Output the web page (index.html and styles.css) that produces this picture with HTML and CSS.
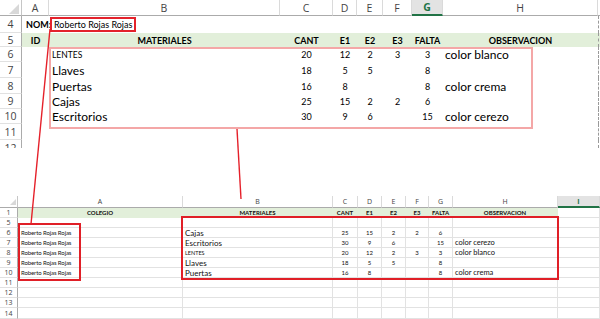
FILE: index.html
```html
<!DOCTYPE html>
<html lang="es">
<head>
<meta charset="utf-8">
<title>Hoja de materiales</title>
<link rel="stylesheet" href="styles.css">
</head>
<body>
<div class="page">
  <div class="sheet top">
    <div class="corner"><span class="tri"></span></div>
    <div class="ch">A</div><div class="ch">B</div><div class="ch">C</div><div class="ch">D</div><div class="ch">E</div><div class="ch">F</div><div class="ch sel">G</div><div class="ch">H</div><div class="ch last"></div>

    <div class="rh">4</div><div class="c b">NOM:</div><div class="c"><span class="namebox">Roberto Rojas Rojas</span></div><div class="c"></div><div class="c"></div><div class="c"></div><div class="c"></div><div class="c"></div><div class="c"></div><div class="c edge"></div>

    <div class="rh">5</div><div class="c g b n">ID</div><div class="c g b n">MATERIALES</div><div class="c g b n">CANT</div><div class="c g b n">E1</div><div class="c g b n">E2</div><div class="c g b n">E3</div><div class="c g b n">FALTA</div><div class="c g b n">OBSERVACION</div><div class="c g edge"></div>

    <div class="rh">6</div><div class="c"></div><div class="c txt sm">LENTES</div><div class="c n num">20</div><div class="c n num">12</div><div class="c n num">2</div><div class="c n num">3</div><div class="c n num">3</div><div class="c obs">color blanco</div><div class="c edge"></div>

    <div class="rh">7</div><div class="c"></div><div class="c txt">Llaves</div><div class="c n num">18</div><div class="c n num">5</div><div class="c n num">5</div><div class="c n num"></div><div class="c n num">8</div><div class="c obs"></div><div class="c edge"></div>

    <div class="rh">8</div><div class="c"></div><div class="c txt">Puertas</div><div class="c n num">16</div><div class="c n num">8</div><div class="c n num"></div><div class="c n num"></div><div class="c n num">8</div><div class="c obs">color crema</div><div class="c edge"></div>

    <div class="rh">9</div><div class="c"></div><div class="c txt">Cajas</div><div class="c n num">25</div><div class="c n num">15</div><div class="c n num">2</div><div class="c n num">2</div><div class="c n num">6</div><div class="c obs"></div><div class="c edge"></div>

    <div class="rh">10</div><div class="c"></div><div class="c txt">Escritorios</div><div class="c n num">30</div><div class="c n num">9</div><div class="c n num">6</div><div class="c n num"></div><div class="c n num">15</div><div class="c obs">color cerezo</div><div class="c edge"></div>

    <div class="rh">11</div><div class="c"></div><div class="c"></div><div class="c"></div><div class="c"></div><div class="c"></div><div class="c"></div><div class="c"></div><div class="c"></div><div class="c edge"></div>

    <div class="rh cut"><span class="cutlabel">12</span></div><div class="c"></div><div class="c"></div><div class="c"></div><div class="c"></div><div class="c"></div><div class="c"></div><div class="c"></div><div class="c"></div><div class="c edge"></div>
  </div>

  <div class="sheet low">
    <div class="corner"><span class="tri"></span></div>
    <div class="ch">A</div><div class="ch">B</div><div class="ch">C</div><div class="ch">D</div><div class="ch">E</div><div class="ch">F</div><div class="ch">G</div><div class="ch">H</div><div class="ch sel">I</div>

    <div class="rh">1</div><div class="c g b n">COLEGIO</div><div class="c g b n">MATERIALES</div><div class="c g b n">CANT</div><div class="c g b n">E1</div><div class="c g b n">E2</div><div class="c g b n">E3</div><div class="c g b n">FALTA</div><div class="c g b n">OBSERVACION</div><div class="c"></div>

    <div class="rh">5</div><div class="c"></div><div class="c"></div><div class="c"></div><div class="c"></div><div class="c"></div><div class="c"></div><div class="c"></div><div class="c"></div><div class="c"></div>

    <div class="rh">6</div><div class="c who">Roberto Rojas Rojas</div><div class="c txt">Cajas</div><div class="c n num">25</div><div class="c n num">15</div><div class="c n num">2</div><div class="c n num">2</div><div class="c n num">6</div><div class="c obs"></div><div class="c"></div>

    <div class="rh">7</div><div class="c who">Roberto Rojas Rojas</div><div class="c txt">Escritorios</div><div class="c n num">30</div><div class="c n num">9</div><div class="c n num">6</div><div class="c n num"></div><div class="c n num">15</div><div class="c obs">color cerezo</div><div class="c"></div>

    <div class="rh">8</div><div class="c who">Roberto Rojas Rojas</div><div class="c txt sm">LENTES</div><div class="c n num">20</div><div class="c n num">12</div><div class="c n num">2</div><div class="c n num">3</div><div class="c n num">3</div><div class="c obs">color blanco</div><div class="c"></div>

    <div class="rh">9</div><div class="c who">Roberto Rojas Rojas</div><div class="c txt">Llaves</div><div class="c n num">18</div><div class="c n num">5</div><div class="c n num">5</div><div class="c n num"></div><div class="c n num">8</div><div class="c obs"></div><div class="c"></div>

    <div class="rh">10</div><div class="c who">Roberto Rojas Rojas</div><div class="c txt">Puertas</div><div class="c n num">16</div><div class="c n num">8</div><div class="c n num"></div><div class="c n num"></div><div class="c n num">8</div><div class="c obs">color crema</div><div class="c"></div>

    <div class="rh">11</div><div class="c"></div><div class="c"></div><div class="c"></div><div class="c"></div><div class="c"></div><div class="c"></div><div class="c"></div><div class="c"></div><div class="c"></div>
    <div class="rh">12</div><div class="c"></div><div class="c"></div><div class="c"></div><div class="c"></div><div class="c"></div><div class="c"></div><div class="c"></div><div class="c"></div><div class="c"></div>
    <div class="rh">13</div><div class="c"></div><div class="c"></div><div class="c"></div><div class="c"></div><div class="c"></div><div class="c"></div><div class="c"></div><div class="c"></div><div class="c"></div>
    <div class="rh">14</div><div class="c"></div><div class="c"></div><div class="c"></div><div class="c"></div><div class="c"></div><div class="c"></div><div class="c"></div><div class="c"></div><div class="c"></div>
  </div>
</div>

<div class="mark mark-top"></div>
<div class="mark mark-a"></div>
<div class="mark mark-b"></div>

<svg class="links" width="600" height="319" viewBox="0 0 600 319">
  <line x1="50" y1="29" x2="31" y2="224"></line>
  <line x1="237" y1="129" x2="241" y2="199"></line>
</svg>
</body>
</html>
```

FILE: styles.css
```css
* {
  box-sizing: border-box;
  margin: 0;
  padding: 0;
}

html, body {
  width: 600px;
  height: 319px;
  overflow: hidden;
  background: #fff;
}

body {
  position: relative;
  font-family: Lato, "Liberation Sans", sans-serif;
  color: #000;
}

.page {
  display: flex;
  flex-direction: column;
  gap: 48px;
}

.sheet {
  display: grid;
  overflow: hidden;
}

.top {
  grid-template-columns: 22px 27px 231px 53px 24px 26px 29px 31px 155px 2px;
  grid-template-rows: 16px 17px 14px 15px 16px 16px 15px 15px 16px 8px;
  height: 148px;
}

.low {
  grid-template-columns: 18px 165px 150px 25px 24px 24px 23px 24px 105px 42px;
  grid-template-rows: 12px repeat(10, 10px) 11px;
  height: 123px;
}

.c,
.ch,
.rh,
.corner {
  display: flex;
  align-items: center;
  white-space: nowrap;
  min-width: 0;
}

.corner {
  justify-content: flex-end;
  align-items: flex-end;
  border-right: 1px solid #c6c6c6;
  border-bottom: 1px solid #ababab;
}

.top .corner { padding: 0 2px 1px 0; }
.low .corner { padding: 0 1px 2px 0; }

.tri {
  width: 0;
  height: 0;
  border-left: 10px solid transparent;
  border-bottom: 10px solid #d8d8d8;
}

.low .tri {
  border-left-width: 6px;
  border-bottom-width: 6px;
}

.ch {
  justify-content: center;
  color: #444;
  border-right: 1px solid #dadada;
  border-bottom: 1px solid #ababab;
  font-family: "Open Sans", Lato, sans-serif;
}

.top .ch { font-size: 10.5px; }
.low .ch { font-size: 7px; }

.ch.sel {
  background: #e3e3e3;
  color: #217346;
  font-weight: bold;
  border-bottom: 2px solid #217346;
}

.ch.last { border-right: 0; }

.rh {
  justify-content: center;
  color: #444;
  border-right: 1px solid #ababab;
  border-bottom: 1px solid #e1e1e1;
  font-family: "Open Sans", Lato, sans-serif;
}

.top .rh { font-size: 10.5px; }
.low .rh { font-size: 7px; }

.rh.cut {
  align-items: flex-start;
  overflow: hidden;
  border-bottom: 0;
}

.cutlabel {
  line-height: 12px;
  margin-top: 2px;
}

.n { justify-content: center; }
.b { font-weight: bold; }
.g { background: #e2efda; }

.edge { border-left: 1px dashed #9a9a9a; }

/* top sheet text */
.top .c { font-size: 9px; }
.top .c.b { padding-left: 4px; }
.top .g.b { padding-left: 0; }
.top .txt { font-size: 12px; padding-left: 3px; }
.top .txt.sm { font-size: 8.5px; }
.top .num { font-size: 9px; }
.top .obs { font-size: 12px; padding-left: 2px; }

.namebox {
  display: inline-block;
  margin-left: 1px;
  padding: 0 2px 0 2px;
  border: 2px solid #e3222b;
  font-size: 9px;
  line-height: 11px;
}

/* lower sheet */
.low .c {
  border-right: 1px solid #e2e2e2;
  border-bottom: 1px solid #e2e2e2;
  font-size: 6px;
  color: #111;
}

.low .c.g { border-color: #e2efda; }
.low .who { font-size: 6px; padding-left: 3px; letter-spacing: -0.1px; }
.low .txt { font-size: 8px; padding-left: 2px; }
.low .txt.sm { font-size: 5.5px; }
.low .num { font-size: 6px; }
.low .obs { font-size: 7.5px; padding-left: 2px; }

/* annotation overlays */
.mark {
  position: absolute;
  pointer-events: none;
}

.mark-top {
  left: 49px;
  top: 47px;
  width: 484px;
  height: 82px;
  border: 2px solid #f4a7a7;
}

.mark-a {
  left: 18px;
  top: 223px;
  width: 63px;
  height: 58px;
  border: 2px solid #e01f27;
}

.mark-b {
  left: 181px;
  top: 216px;
  width: 378px;
  height: 64px;
  border: 2px solid #e01f27;
}

.links {
  position: absolute;
  left: 0;
  top: 0;
  pointer-events: none;
}

.links line {
  stroke: #e5202a;
  stroke-width: 1.4;
}
```
